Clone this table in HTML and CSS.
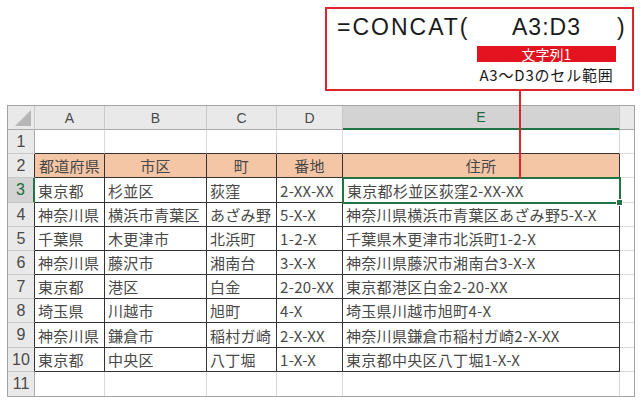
FILE: index.html
```html
<!DOCTYPE html>
<html lang="ja">
<head>
<meta charset="utf-8">
<link rel="stylesheet" href="styles.css">
</head>
<body>
<div class="page">
  <div class="callout">
    <div class="formula">
      <span class="fn">=CONCAT(</span>
      <div class="arg">
        <span class="argtext">A3:D3</span>
        <span class="label">文字列1</span>
        <span class="note">A3～D3のセル範囲</span>
      </div>
      <span class="close">)</span>
    </div>
  </div>
  <div class="connector"></div>

  <div class="sheet">
    <div class="ch corner"><svg width="18" height="18" viewBox="0 0 18 18"><polygon points="17,1 17,17 1,17" fill="#b6b6b6"/></svg></div>
    <div class="ch">A</div><div class="ch">B</div><div class="ch">C</div><div class="ch">D</div><div class="ch sel">E</div><div class="ch last"></div>

    <div class="rh top">1</div>
    <div class="c topedge"></div><div class="c topedge"></div><div class="c topedge"></div><div class="c topedge"></div><div class="c topedge"></div><div class="c last"></div>

    <div class="rh edge">2</div>
    <div class="t th">都道府県</div><div class="t th">市区</div><div class="t th">町</div><div class="t th">番地</div><div class="t th">住所</div><div class="c last"></div>

    <div class="rh edge rsel">3</div>
    <div class="t">東京都</div><div class="t">杉並区</div><div class="t">荻窪</div><div class="t">2-XX-XX</div><div class="t active">東京都杉並区荻窪2-XX-XX</div><div class="c last"></div>

    <div class="rh edge">4</div>
    <div class="t">神奈川県</div><div class="t">横浜市青葉区</div><div class="t">あざみ野</div><div class="t">5-X-X</div><div class="t">神奈川県横浜市青葉区あざみ野5-X-X</div><div class="c last"></div>

    <div class="rh edge">5</div>
    <div class="t">千葉県</div><div class="t">木更津市</div><div class="t">北浜町</div><div class="t">1-2-X</div><div class="t">千葉県木更津市北浜町1-2-X</div><div class="c last"></div>

    <div class="rh edge">6</div>
    <div class="t">神奈川県</div><div class="t">藤沢市</div><div class="t">湘南台</div><div class="t">3-X-X</div><div class="t">神奈川県藤沢市湘南台3-X-X</div><div class="c last"></div>

    <div class="rh edge">7</div>
    <div class="t">東京都</div><div class="t">港区</div><div class="t">白金</div><div class="t">2-20-XX</div><div class="t">東京都港区白金2-20-XX</div><div class="c last"></div>

    <div class="rh edge">8</div>
    <div class="t">埼玉県</div><div class="t">川越市</div><div class="t">旭町</div><div class="t">4-X</div><div class="t">埼玉県川越市旭町4-X</div><div class="c last"></div>

    <div class="rh edge">9</div>
    <div class="t">神奈川県</div><div class="t">鎌倉市</div><div class="t">稲村ガ崎</div><div class="t">2-X-XX</div><div class="t">神奈川県鎌倉市稲村ガ崎2-X-XX</div><div class="c last"></div>

    <div class="rh edge">10</div>
    <div class="t">東京都</div><div class="t">中央区</div><div class="t">八丁堀</div><div class="t">1-X-X</div><div class="t">東京都中央区八丁堀1-X-X</div><div class="c last"></div>

    <div class="rh bottom">11</div>
    <div class="c bottom"></div><div class="c bottom"></div><div class="c bottom"></div><div class="c bottom"></div><div class="c bottom"></div><div class="c last bottom"></div>
  </div>
</div>
</body>
</html>
```

FILE: styles.css
```css
html, body {
  margin: 0;
  padding: 0;
  background: #ffffff;
}

.page {
  position: relative;
  width: 640px;
  height: 403px;
  padding-top: 7px;
  box-sizing: border-box;
}

.callout {
  margin-left: 325px;
  width: 309px;
  height: 84px;
  box-sizing: border-box;
  border: 2px solid #e0242d;
  padding: 7px 0 0 10px;
  background: #ffffff;
}

.formula {
  display: flex;
  align-items: flex-start;
}

.fn, .argtext, .close {
  font-family: "Liberation Sans", Arial, sans-serif;
  font-size: 23px;
  line-height: 23px;
  color: #1a1a1a;
  letter-spacing: 2px;
  white-space: nowrap;
}

.fn {
  width: 140px;
}

.arg {
  width: 139px;
  display: flex;
  flex-direction: column;
  align-items: center;
}

.argtext {
  letter-spacing: 1px;
}

.label {
  margin-top: 7px;
  width: 139px;
  height: 16px;
  background: #e3131f;
  color: #ffffff;
  font-family: "Noto Sans CJK JP", sans-serif;
  font-size: 14px;
  line-height: 16px;
  text-align: center;
}

.note {
  margin-top: 5px;
  font-family: "Noto Sans CJK JP", sans-serif;
  font-size: 15px;
  line-height: 16px;
  color: #1a1a1a;
  white-space: nowrap;
  letter-spacing: 0.8px;
}

.close {
  margin-left: 1px;
}

.connector {
  position: absolute;
  left: 519px;
  top: 91px;
  width: 2px;
  height: 88px;
  background: #e0242d;
  z-index: 3;
}

.sheet {
  margin-top: 14px;
  margin-left: 7px;
  width: 628px;
  box-sizing: border-box;
  border: 1px solid #a3a3a3;
  display: grid;
  grid-template-columns: 27px 70px 102px 70px 66px 277px 1fr;
  grid-template-rows: 24px 24px 24px 25px 24px 24px 24px 24px 24px 25px 24px 24px;
  font-family: "Noto Sans CJK JP", sans-serif;
}

.sheet > div {
  box-sizing: border-box;
  border-right: 1px solid #dadada;
  border-bottom: 1px solid #dadada;
  display: flex;
  align-items: center;
  overflow: visible;
  white-space: nowrap;
}

.ch {
  background: #e9e9e9;
  justify-content: center;
  font-family: "Liberation Sans", Arial, sans-serif;
  font-size: 14px;
  color: #4a4a4a;
  border-right-color: #c9c9c9 !important;
  border-bottom-color: #ababab !important;
}

.ch.corner {
  align-items: flex-end;
  justify-content: flex-end;
  padding: 0 2px 2px 0;
}

.ch.sel {
  background: #d3d3d3;
  color: #1f6b3f;
  border-bottom: 2px solid #217346 !important;
}

.rh {
  background: #e9e9e9;
  justify-content: center;
  font-family: "Liberation Sans", Arial, sans-serif;
  font-size: 16px;
  color: #4a4a4a;
  border-right-color: #ababab !important;
  border-bottom-color: #c9c9c9 !important;
}

.rh.edge {
  border-right-color: #333333 !important;
}

.rh.rsel {
  background: #d3d3d3;
  color: #1f6b3f;
  border-right: 2px solid #217346 !important;
}

.c.topedge {
  border-bottom-color: #333333;
}

.sheet > .last {
  border-right: none;
}

.sheet > .bottom {
  border-bottom: none !important;
}

.t {
  border-right-color: #333333 !important;
  border-bottom-color: #333333 !important;
  padding-left: 3px;
  font-size: 15px;
  color: #484848;
  letter-spacing: 0.3px;
}

.t.th {
  background: #f4c6a6;
  justify-content: center;
  padding-left: 0;
}

.t.active {
  position: relative;
  padding-left: 4px;
}

.t.active::before {
  content: "";
  position: absolute;
  left: -1px;
  top: -1px;
  right: -2px;
  bottom: -2px;
  border: 2px solid #217346;
  pointer-events: none;
}

.t.active::after {
  content: "";
  position: absolute;
  right: -4px;
  bottom: -4px;
  width: 5px;
  height: 5px;
  background: #217346;
  border: 1px solid #ffffff;
  z-index: 2;
}
```
